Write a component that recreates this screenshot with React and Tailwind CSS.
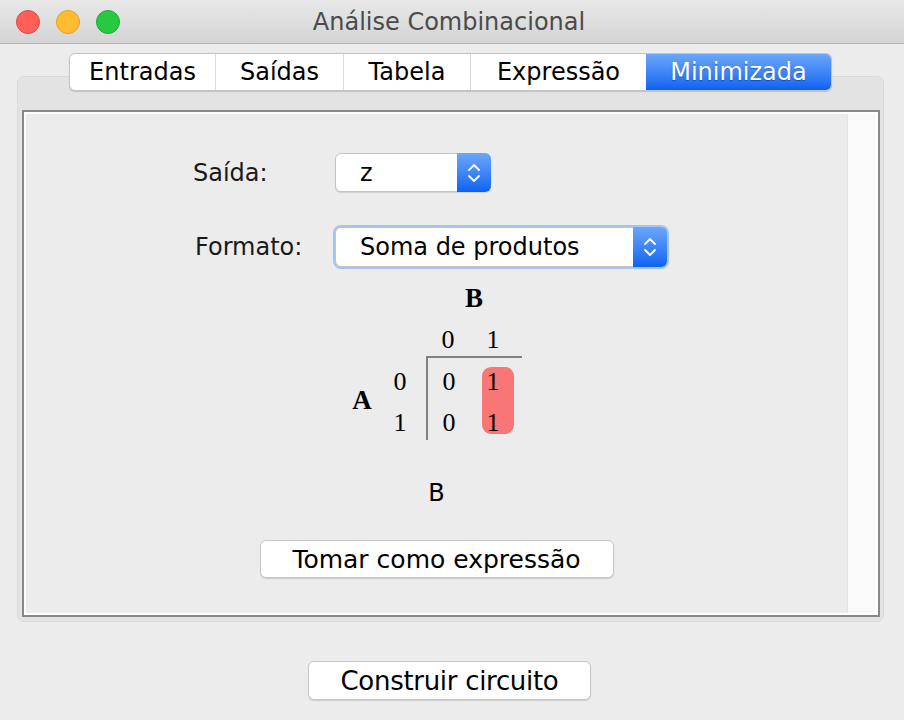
import React from 'react';

const tabs = [
  { label: 'Entradas', w: 'w-[145px]' },
  { label: 'Saídas', w: 'w-[128px]' },
  { label: 'Tabela', w: 'w-[127px]' },
  { label: 'Expressão', w: 'w-[176px]' },
  { label: 'Minimizada', w: 'w-[185px]', active: true },
];

const Chevrons = () => (
  <svg width="16" height="26" viewBox="0 0 16 26" fill="none" stroke="white" strokeWidth="1.8" strokeLinecap="round" strokeLinejoin="round">
    <path d="M3 10 L8 5 L13 10" />
    <path d="M3 16 L8 21 L13 16" />
  </svg>
);

const Select = ({ value, wide }) => (
  <div
    className={`flex items-stretch rounded-[6px] bg-white border border-[#c4c4c4] ${
      wide
        ? 'w-[332px] h-[40px] shadow-[0_0_0_2px_rgba(120,170,245,0.6)]'
        : 'w-[156px] h-[39px] shadow-[0_1px_1px_rgba(0,0,0,0.12)]'
    }`}
  >
    <div className="flex-1 flex items-center pl-[24px] text-[24px] leading-none text-black">{value}</div>
    <div className="w-[34px] -my-px -mr-px rounded-r-[6px] bg-gradient-to-b from-[#6aa6fa] to-[#0a62f1] flex items-center justify-center">
      <Chevrons />
    </div>
  </div>
);

const Button = ({ children, w }) => (
  <button className={`${w} bg-white rounded-[6px] border border-[#c8c8c8] shadow-[0_1px_1px_rgba(0,0,0,0.14)] leading-none text-black flex items-center justify-center`}>
    {children}
  </button>
);

const App = () => {
  return (
    <div className="w-[904px] h-[720px] bg-[#ececec] overflow-hidden flex flex-col font-['DejaVu_Sans','Noto_Sans',sans-serif]">
      {/* title bar */}
      <div className="h-[44px] shrink-0 border-b border-[#b4b4b4] bg-gradient-to-b from-[#e8e8e8] to-[#d4d4d4] grid grid-cols-[1fr_auto_1fr] items-center">
        <div className="flex items-center gap-[16px] pl-[16px]">
          <span className="w-[24px] h-[24px] rounded-full bg-[#fe5f57] border border-[#e2463f]" />
          <span className="w-[24px] h-[24px] rounded-full bg-[#febc2e] border border-[#e0a126]" />
          <span className="w-[24px] h-[24px] rounded-full bg-[#28c840] border border-[#1fab2f]" />
        </div>
        <div className="text-[24px] leading-none text-[#4b4b4b] pr-[6px]">Análise Combinacional</div>
        <div />
      </div>

      <div className="flex flex-col pl-[17px] pr-[20px]">
        {/* tabs */}
        <div className="relative z-10 mt-[9px] flex justify-center">
          <div className="flex h-[38px] rounded-[6px] overflow-hidden border border-[#c4c4c4] bg-white shadow-[0_1px_1px_rgba(0,0,0,0.15)]">
            {tabs.map((t, i) => (
              <div
                key={t.label}
                className={`${t.w} flex items-center justify-center text-[24px] leading-none ${
                  t.active
                    ? 'bg-gradient-to-b from-[#6aa6fa] to-[#0a62f1] text-white [text-shadow:0_1px_1px_rgba(0,0,60,0.35)]'
                    : 'text-black'
                } ${i > 0 && !t.active ? 'border-l border-[#d9d9d9]' : ''}`}
              >
                {t.label}
              </div>
            ))}
          </div>
        </div>

        {/* tab box */}
        <div className="-mt-[15px] h-[546px] rounded-[7px] border border-[#d9d9d9] bg-[#e3e3e3] pt-[33px] pl-[4px] pr-[3px] pb-[4px] flex flex-col">
          <div className="flex-1 flex border-2 border-[#888888] bg-[#ececec] shadow-[inset_0_0_0_2px_#ffffff]">
            <div className="flex-1 flex flex-col pt-[41px] pl-[2px]">
              {/* form */}
              <div className="flex items-center pl-[167px]">
                <div className="w-[142px] text-[24px] leading-none text-[#1a1a1a]">Saída:</div>
                <Select value="z" />
              </div>
              <div className="flex items-center pl-[167px] mt-[35px]">
                <div className="w-[142px] text-[24px] leading-none text-[#1a1a1a] pl-[2px]">Formato:</div>
                <Select value="Soma de produtos" wide />
              </div>

              {/* karnaugh map */}
              <div className="ml-[324px] mt-[13px] grid grid-cols-[24px_52px_44px_44px_8px] grid-rows-[36px_42px_41px_41px] font-['Liberation_Serif',serif] text-[26px] leading-none text-black">
                <div className="col-start-3 col-span-3 row-start-1 flex items-center justify-center font-bold text-[27px]">B</div>

                <div className="col-start-3 row-start-2 border-b-2 border-[#808080] flex items-center justify-center pt-[8px]">0</div>
                <div className="col-start-4 row-start-2 border-b-2 border-[#808080] flex items-center justify-center pt-[8px] pl-[2px]">1</div>
                <div className="col-start-5 row-start-2 border-b-2 border-[#808080]" />

                <div className="col-start-1 row-start-3 row-span-2 flex items-center justify-center font-bold text-[27px] pt-[2px]">A</div>
                <div className="col-start-2 row-start-3 flex items-center justify-center pt-[6px]">0</div>
                <div className="col-start-2 row-start-4 flex items-center justify-center pt-[6px]">1</div>

                <div className="col-start-3 row-start-3 border-l-2 border-[#808080] flex items-center justify-center pt-[6px]">0</div>
                <div className="col-start-3 row-start-4 border-l-2 border-[#808080] flex items-center justify-center pt-[6px]">0</div>

                <div className="col-start-4 row-start-3 row-span-2 ml-[12px] w-[32px] mt-[9px] mb-[6px] rounded-[9px] bg-[#f87676]" />
                <div className="relative col-start-4 row-start-3 flex items-center justify-center pt-[6px] pl-[2px]">1</div>
                <div className="relative col-start-4 row-start-4 flex items-center justify-center pt-[6px] pl-[2px]">1</div>
              </div>

              <div className="mt-[39px] h-[28px] flex items-center justify-center text-[24px] leading-none text-black">B</div>

              <div className="mt-[33px] flex justify-center">
                <Button w="w-[354px] h-[38px] text-[25px]">Tomar como expressão</Button>
              </div>
            </div>
            <div className="w-[29px] my-[2px] mr-[2px] bg-[#f9f9f9] border-l border-[#e4e4e4]" />
          </div>
        </div>

        <div className="mt-[39px] flex justify-center pr-[2px]">
          <Button w="w-[283px] h-[39px] text-[26px] tracking-[-0.3px]">Construir circuito</Button>
        </div>
      </div>
    </div>
  );
};

export default App;
